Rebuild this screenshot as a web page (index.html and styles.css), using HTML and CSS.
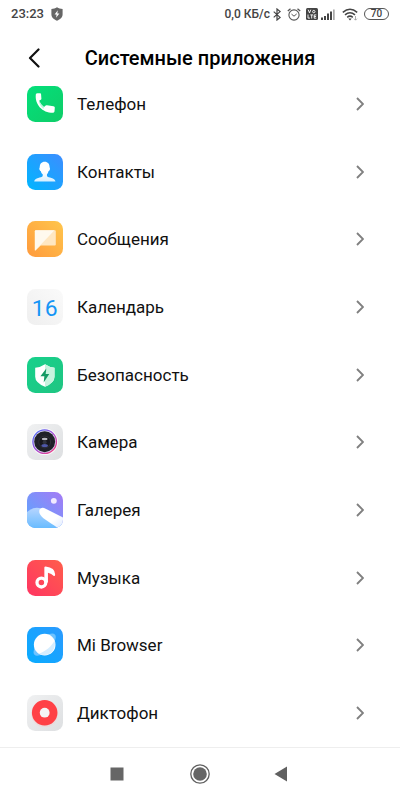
FILE: index.html
```html
<!DOCTYPE html>
<html lang="ru">
<head>
<meta charset="utf-8">
<meta name="viewport" content="width=device-width, initial-scale=1">
<title>Системные приложения</title>
<link rel="stylesheet" href="styles.css">
</head>
<body>
<svg class="defs" aria-hidden="true">
  <defs>
    <linearGradient id="green" x1="0" y1="0" x2="1" y2="1"><stop offset="0" stop-color="#03e07b"/><stop offset="1" stop-color="#0fcd68"/></linearGradient>
    <linearGradient id="blue" x1="1" y1="0" x2="0" y2="1"><stop offset="0" stop-color="#3d8dff"/><stop offset="1" stop-color="#00b6ff"/></linearGradient>
    <linearGradient id="orange" x1="1" y1="0" x2="0" y2="1"><stop offset="0" stop-color="#ffc64d"/><stop offset="1" stop-color="#ff9a3c"/></linearGradient>
    <linearGradient id="grey" x1="0" y1="0" x2="1" y2="1"><stop offset="0" stop-color="#f0f1f2"/><stop offset="1" stop-color="#dddfe1"/></linearGradient>
    <linearGradient id="pale" x1="1" y1="0" x2="0" y2="1"><stop offset="0" stop-color="#fafafa"/><stop offset="1" stop-color="#efefef"/></linearGradient>
    <linearGradient id="mint" x1="0" y1="0" x2="1" y2="1"><stop offset="0" stop-color="#16d18b"/><stop offset="1" stop-color="#20c582"/></linearGradient>
    <linearGradient id="ring" x1="0" y1="0" x2="1" y2="1"><stop offset="0" stop-color="#3b72ff"/><stop offset=".5" stop-color="#a64bd6"/><stop offset="1" stop-color="#ff3e72"/></linearGradient>
    <linearGradient id="sky" x1="0" y1="1" x2="1" y2="0"><stop offset="0" stop-color="#55a9ff"/><stop offset="1" stop-color="#a67af5"/></linearGradient>
    <linearGradient id="hill" x1="0" y1="0" x2="0" y2="1"><stop offset="0" stop-color="#b7d5ff"/><stop offset="1" stop-color="#69bcff"/></linearGradient>
    <linearGradient id="snow" x1="0" y1="0" x2="1" y2="1"><stop offset="0" stop-color="#fff"/><stop offset=".6" stop-color="#fff"/><stop offset="1" stop-color="#dfeaff"/></linearGradient>
    <linearGradient id="red" x1="1" y1="0" x2="0" y2="1"><stop offset="0" stop-color="#ff5e4b"/><stop offset="1" stop-color="#ff3562"/></linearGradient>
    <linearGradient id="web" x1="1" y1="0" x2="0" y2="1"><stop offset="0" stop-color="#2b9aff"/><stop offset="1" stop-color="#08acff"/></linearGradient>
    <linearGradient id="fade" x1="0" y1="0" x2="0" y2="1"><stop offset=".5" stop-color="#fff"/><stop offset="1" stop-color="#d6efff"/></linearGradient>
    <clipPath id="tile"><rect width="110" height="110" rx="25"/></clipPath>
    <symbol id="chevron" viewBox="0 0 8 14"><path d="M1 1l6 6-6 6" fill="none" stroke="#808080" stroke-width="1.900"/></symbol>
  </defs>
</svg>

<div class="status">
  <time class="clock">23:23</time>
  <svg width="12" height="14" viewBox="0 0 12 14" aria-hidden="true"><path d="M6 .3C7.700 1.600 9.500 2 11.600 2v5.500c0 3-2.600 4.900-5.600 6.200C3 12.400.4 10.500.4 7.500V2C2.500 2 4.300 1.600 6 .3z" fill="#666"/><path d="M6.800 3.300L3.600 7.400h2l-.5 3.300 3.300-4.300H6.300z" fill="#fff"/></svg>
  <span class="speed">0,0 КБ/с</span>
  <svg class="bluetooth" width="8" height="13" viewBox="0 0 8 13" aria-hidden="true"><path d="M.7 3.600l6.400 5.800L4 12V1l3.100 2.600L.7 9.400" fill="none" stroke="#444" stroke-width="1.200"/></svg>
  <svg class="alarm" width="14" height="13" viewBox="0 0 14 13" aria-hidden="true" fill="none" stroke="#555"><circle cx="7" cy="7" r="5.100" stroke-width="1.100"/><path d="M.8 3.100L3.500.8M13.200 3.100L10.500.8" stroke-width="1.300"/><path d="M4.500 6.100L7 8.200l2.700-2.300"/></svg>
  <svg class="volte" width="12" height="12" viewBox="0 0 12 12" aria-hidden="true"><rect width="12" height="12" rx="1.500" fill="#444"/><path d="M2.200 1.700l1.300 3.200 1.300-3.200M2 6.500v3.600h2M4.300 6.900h2.800M5.700 6.900v3.600M10.300 6.900H8.200v3.300h2.100M8.200 8.500h1.900" fill="none" stroke="#fff" stroke-width=".9"/><circle cx="7.800" cy="3.600" r="1.200" fill="none" stroke="#fff" stroke-width=".9"/></svg>
  <svg class="signal" width="14" height="11" viewBox="0 0 14 11" aria-hidden="true"><path d="M0 8.500h2V11H0zM3 7h2v4H3zM6 4.500h2V11H6zM9 2.500h2V11H9z" fill="#444"/><path d="M12 .5h1.700V11H12z" fill="#aaa"/></svg>
  <svg class="wifi" width="16" height="13" viewBox="0 0 16 13" aria-hidden="true" fill="none" stroke="#444" stroke-width="1.500"><path d="M.8 4.400Q8-1.900 15.200 4.400M3 6.900Q8 2.600 13 6.900M5.200 9.300Q8 7 10.800 9.300"/><path d="M6.300 10.500h3.400L8 12.400z" fill="#444" stroke="none"/><path d="M13.500 8v4M12 10.700l1.500 1.500 1.500-1.500" stroke="#999" stroke-width=".8"/></svg>
  <span class="battery">70</span>
</div>

<header class="header">
  <button class="back" type="button" aria-label="Назад"><svg width="12" height="20" viewBox="0 0 12 20" aria-hidden="true"><path d="M10.500 1.500L2 10l8.500 8.500" fill="none" stroke="#111" stroke-width="2.200" stroke-linecap="round" stroke-linejoin="round"/></svg></button>
  <h1 class="title">Системные приложения</h1>
</header>

<main class="list">
  <a class="row" href="#phone">
    <svg class="icon" viewBox="0 0 110 110" aria-hidden="true"><rect width="110" height="110" rx="25" fill="url(#green)"/><path d="M27 25q1-3 5-3h8q3 0 3 3l1 14q0 3-3 4l-4 2q4 11 15 19l4-4q2-2 5-1l20 3q4 1 4 4l-1 12q-1 4-5 4C47 82 23 56 27 25z" fill="#fff"/><path d="M36 49l3-1q4 10 13 17l-2 5Q41 64 36 49z" fill="#b8f6de"/></svg>
    <span class="name">Телефон</span><svg class="chevron" aria-hidden="true"><use href="#chevron"/></svg>
  </a>
  <a class="row" href="#contacts">
    <svg class="icon" viewBox="0 0 110 110" aria-hidden="true"><rect width="110" height="110" rx="25" fill="url(#blue)"/><path d="M54 24c10 0 15 7 15 16 0 3 2 3 1 7-1 3-2 4-4 5-1 5-3 8-5 10v5c3 6 25 5 26 17H22c1-12 23-11 26-17v-5c-3-2-5-5-6-10-2-1-3-2-4-5-1-4 1-4 1-7 0-9 5-16 15-16z" fill="url(#fade)"/></svg>
    <span class="name">Контакты</span><svg class="chevron" aria-hidden="true"><use href="#chevron"/></svg>
  </a>
  <a class="row" href="#messages">
    <svg class="icon" viewBox="0 0 110 110" aria-hidden="true"><rect width="110" height="110" rx="25" fill="url(#orange)"/><path d="M27 28h58q3 0 3 3v41q0 3-3 3H42L26 90q-2 1-2-1V31q0-3 3-3z" fill="#ffe7c2"/><path d="M27 28h57L25 90q-1 0-1-2V31q0-3 3-3z" fill="#fff9ee"/></svg>
    <span class="name">Сообщения</span><svg class="chevron" aria-hidden="true"><use href="#chevron"/></svg>
  </a>
  <a class="row" href="#calendar">
    <svg class="icon" viewBox="0 0 110 110" aria-hidden="true"><rect width="110" height="110" rx="25" fill="url(#pale)"/><text class="day" x="54" y="81" text-anchor="middle">16</text></svg>
    <span class="name">Календарь</span><svg class="chevron" aria-hidden="true"><use href="#chevron"/></svg>
  </a>
  <a class="row" href="#security">
    <svg class="icon" viewBox="0 0 110 110" aria-hidden="true"><rect width="110" height="110" rx="25" fill="url(#mint)"/><path d="M55 22q13 9 29 11v27q0 18-29 31Q25 78 25 60V33q17-2 30-11z" fill="#fff"/><path d="M55 22q13 9 29 11v27q0 18-29 31z" fill="#c7f3df"/><path d="M59 35L41 59h12l-2 19 17-26H57z" fill="#159a65"/></svg>
    <span class="name">Безопасность</span><svg class="chevron" aria-hidden="true"><use href="#chevron"/></svg>
  </a>
  <a class="row" href="#camera">
    <svg class="icon" viewBox="0 0 110 110" aria-hidden="true"><rect width="110" height="110" rx="25" fill="url(#grey)"/><circle cx="54" cy="54" r="41" fill="#f7f7fa"/><circle cx="54" cy="54" r="36" fill="#d9d5f0" stroke="url(#ring)" stroke-width="4"/><circle cx="54" cy="54" r="32" fill="#1f2028"/><circle cx="54" cy="55" r="18" fill="#17171d" stroke="#3a3b45" stroke-width="2"/><ellipse cx="54" cy="46" rx="9" ry="4" fill="#b5b5be"/><circle cx="54" cy="56" r="6" fill="#30323d"/><ellipse cx="54" cy="66" rx="10" ry="5" fill="#4f58a8"/></svg>
    <span class="name">Камера</span><svg class="chevron" aria-hidden="true"><use href="#chevron"/></svg>
  </a>
  <a class="row" href="#gallery">
    <svg class="icon" viewBox="0 0 110 110" aria-hidden="true"><g clip-path="url(#tile)"><rect width="110" height="110" fill="url(#sky)"/><path d="M0 61Q26 38 56 56l54 42v12H0z" fill="url(#hill)"/><path d="M38 64c-3-13 7-21 19-13l53 27v32H94C65 88 43 80 38 64z" fill="url(#snow)"/><circle cx="82" cy="27" r="9" fill="#f1eaff"/></g></svg>
    <span class="name">Галерея</span><svg class="chevron" aria-hidden="true"><use href="#chevron"/></svg>
  </a>
  <a class="row" href="#music">
    <svg class="icon" viewBox="0 0 110 110" aria-hidden="true"><rect width="110" height="110" rx="25" fill="url(#red)"/><circle cx="44" cy="69" r="13.500" fill="none" stroke="#fff" stroke-width="10"/><path d="M53 23q0-3 4-3 29 4 29 24 0 6-4 5-7-8-18-10v30H53z" fill="#fff"/></svg>
    <span class="name">Музыка</span><svg class="chevron" aria-hidden="true"><use href="#chevron"/></svg>
  </a>
  <a class="row" href="#browser">
    <svg class="icon" viewBox="0 0 110 110" aria-hidden="true"><rect width="110" height="110" rx="25" fill="url(#web)"/><ellipse cx="54" cy="54" rx="44" ry="19" transform="rotate(-45 54 54)" fill="#6fc3ff"/><circle cx="54" cy="54" r="33" fill="#fff"/><path d="M84 41c8 25-15 55-48 41C57 73 75 60 84 41z" fill="#d5edff"/></svg>
    <span class="name">Mi Browser</span><svg class="chevron" aria-hidden="true"><use href="#chevron"/></svg>
  </a>
  <a class="row" href="#recorder">
    <svg class="icon" viewBox="0 0 110 110" aria-hidden="true"><rect width="110" height="110" rx="25" fill="url(#grey)"/><circle cx="54" cy="57" r="41" fill="#f3cfcf" opacity=".5"/><circle cx="54" cy="54" r="39" fill="#ff4146"/><circle cx="54" cy="54" r="15" fill="#f5f5f5"/></svg>
    <span class="name">Диктофон</span><svg class="chevron" aria-hidden="true"><use href="#chevron"/></svg>
  </a>
</main>

<nav class="navbar">
  <button type="button" aria-label="Недавние"><svg width="20" height="20" viewBox="0 0 20 20" aria-hidden="true"><rect x="3.500" y="3.500" width="13" height="13" fill="#666"/></svg></button>
  <button type="button" aria-label="Домой"><svg width="20" height="20" viewBox="0 0 20 20" aria-hidden="true"><circle cx="10" cy="10" r="9.200" fill="none" stroke="#606060" stroke-width="1.300"/><circle cx="10" cy="10" r="6.800" fill="#666"/></svg></button>
  <button type="button" aria-label="Назад"><svg width="20" height="20" viewBox="0 0 20 20" aria-hidden="true"><path d="M1.500 10L14 2.500v15z" fill="#606060"/></svg></button>
</nav>
</body>
</html>
```
FILE: styles.css
```css
* {
  box-sizing: border-box;
}

body {
  display: flex;
  flex-direction: column;
  min-height: 100vh;
  margin: 0;
  background: #fff;
  color: #111;
  font-family: Roboto, "Liberation Sans", sans-serif;
}

svg {
  display: block;
  flex: none;
}

button {
  display: flex;
  align-items: center;
  justify-content: center;
  padding: 0;
  border: 0;
  background: none;
}

.defs {
  position: absolute;
  width: 0;
  height: 0;
}

.status {
  display: flex;
  align-items: center;
  height: 28px;
  padding: 0 11px;
  color: #444;
  font-size: 12px;
  font-weight: 500;
  line-height: 16px;
}

.clock {
  margin-right: 7px;
  font-size: 13px;
}

.speed {
  margin-left: auto;
}

.bluetooth {
  margin-left: 3px;
}

.alarm {
  margin-left: 6px;
}

.volte {
  margin-left: 5px;
}

.signal {
  margin-left: 3px;
}

.wifi {
  margin: 0 6px 0 7px;
}

.battery {
  width: 25px;
  border: 1px solid #555;
  border-radius: 6px;
  font-size: 10px;
  line-height: 10px;
  text-align: center;
}

.header {
  display: grid;
  grid-template-columns: 48px 1fr 48px;
  align-items: center;
  padding: 18px 10px 0;
}

.back {
  height: 24px;
}

.title {
  margin: 0;
  color: #000;
  font-size: 20px;
  font-weight: 500;
  line-height: 24px;
  text-align: center;
}

.list {
  display: flex;
  flex: 1;
  flex-direction: column;
}

.row {
  display: flex;
  flex: 1;
  align-items: center;
  gap: 14px;
  min-height: 48px;
  padding: 0 36px 0 27px;
  color: inherit;
  text-decoration: none;
}

.icon {
  width: 36px;
  height: 36px;
}

.name {
  flex: 1;
  font-size: 17px;
  line-height: 24px;
}

.chevron {
  width: 8px;
  height: 14px;
}

.day {
  fill: #1495f5;
  font-family: Roboto, sans-serif;
  font-size: 70px;
}

.navbar {
  display: flex;
  align-items: center;
  justify-content: center;
  gap: 63px;
  height: 53px;
  border-top: 1px solid #eee;
}
```
